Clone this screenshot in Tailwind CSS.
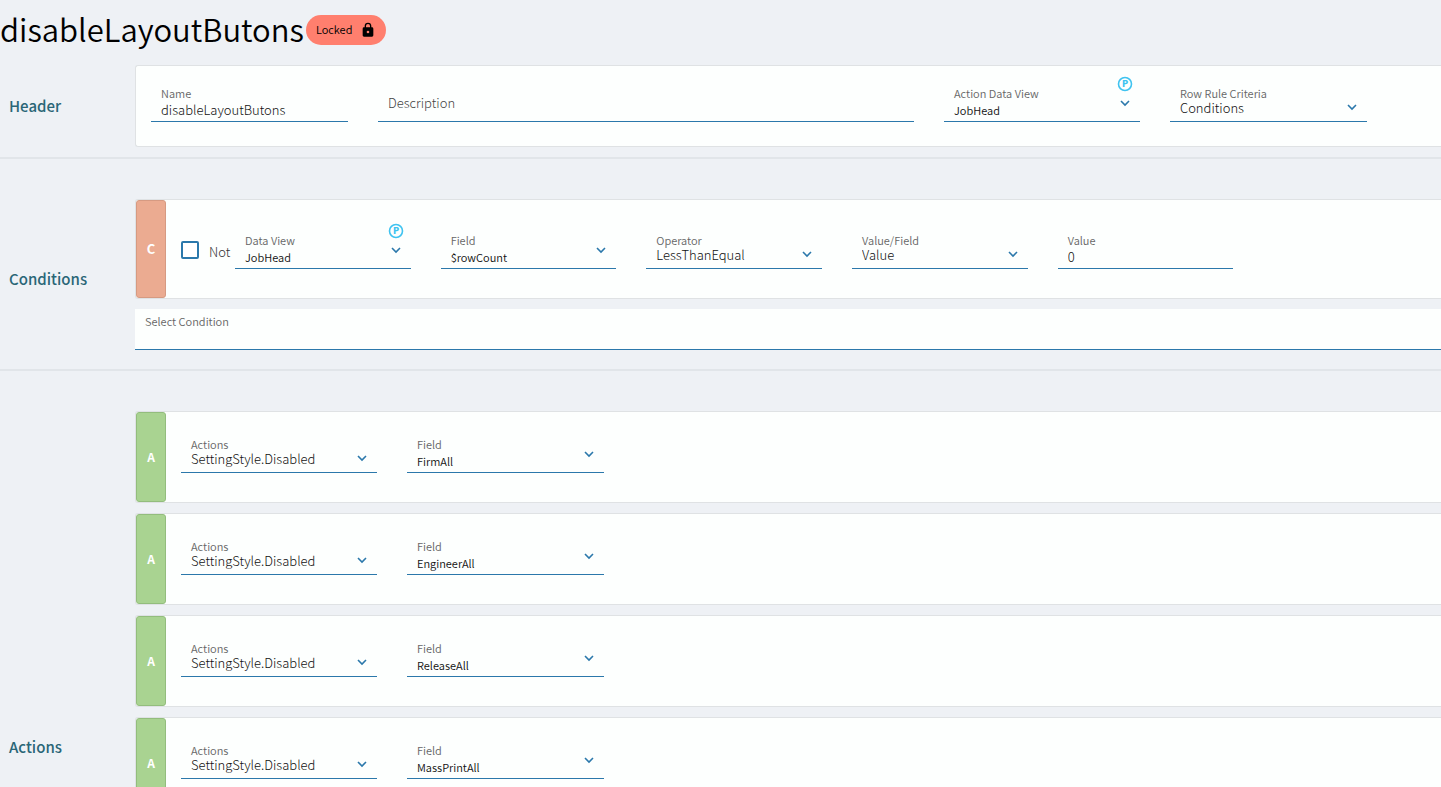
<!DOCTYPE html>
<html lang="en">
<head>
  <meta charset="UTF-8" />
  <meta name="viewport" content="width=device-width, initial-scale=1.0" />
  <title>disableLayoutButons</title>
  <script src="https://cdn.jsdelivr.net/npm/@tailwindcss/browser@4"></script>
</head>
<body class="h-screen overflow-hidden bg-[#eef1f5] font-['Noto_Sans_CJK_JP',sans-serif] font-[350] text-[#111]">

  <!-- Shared icons -->
  <svg class="hidden">
    <symbol id="chevron" viewBox="0 0 10 10"><path d="M1 3l4 4 4-4" fill="none" stroke="currentColor" stroke-width="1.6" /></symbol>
    <symbol id="lock" viewBox="0 0 24 24"><path fill="currentColor" d="M18 8h-1V6A5 5 0 0 0 7 6v2H6a2 2 0 0 0-2 2v10c0 1.100.9 2 2 2h12a2 2 0 0 0 2-2V10a2 2 0 0 0-2-2zm-6 9a2 2 0 1 1 0-4 2 2 0 0 1 0 4zm3-9H9V6a3 3 0 0 1 6 0v2z" /></symbol>
  </svg>

  <!-- Title -->
  <header class="flex h-[65px] items-start gap-[2px]">
    <h1 class="text-[31px] leading-[58px] font-[350] text-black">disableLayoutButons</h1>
    <button type="button" class="mt-[15px] flex h-[30px] w-20 items-center justify-between rounded-full bg-[#ff7f6e] px-[10px] pb-[1px] text-[11px] text-black">
      Locked
      <svg class="size-4"><use href="#lock" /></svg>
    </button>
  </header>

  <main>
    <!-- Header -->
    <section class="flex items-stretch border-b-2 border-[#e1e5e9] pb-[10px]">
      <h2 class="flex w-[135px] shrink-0 items-center pl-[9px] text-[15px] font-medium text-[#2a6677]">Header</h2>
      <div class="grid h-[82px] flex-1 grid-cols-[197fr_536fr_196fr_197fr_44fr] gap-[30px] rounded-l-[3px] border border-r-0 border-[#dfe2e4] bg-[#fdfffe] pt-[21px] pl-[15px]">
        <div class="h-[35px] border-b border-[#2b78ab]">
          <label for="name" class="block px-[10px] text-[11px] leading-[12px] text-[#666]">Name</label>
          <input id="name" type="text" value="disableLayoutButons" class="block h-5 w-full px-[10px] text-[13px] font-light outline-none" />
        </div>
        <div class="h-[35px] border-b border-[#2b78ab]">
          <input id="description" type="text" placeholder="Description" aria-label="Description" class="block h-[31px] w-full px-[10px] text-[13px] font-light outline-none placeholder:text-[#444]" />
        </div>
        <div class="relative h-[35px] border-b border-[#2b78ab]">
          <label for="actionView" class="block px-[10px] text-[11px] leading-[12px] text-[#666]">Action Data View</label>
          <input id="actionView" type="text" value="JobHead" class="block h-[22px] w-full px-[10px] text-[11px] outline-none" />
          <svg viewBox="0 0 16 16" class="absolute right-[7px] bottom-[29px] size-4 text-[#3fc3f0]">
            <circle cx="8" cy="8" r="6.5" fill="none" stroke="currentColor" stroke-width="1.6" />
            <text x="8" y="11" text-anchor="middle" fill="currentColor" class="text-[9px] font-black">P</text>
          </svg>
          <svg class="absolute right-[10px] bottom-[13px] size-[10px] text-[#2b78ab]"><use href="#chevron" /></svg>
        </div>
        <div class="relative h-[35px] border-b border-[#2b78ab]">
          <label for="criteria" class="block px-[10px] text-[11px] leading-[12px] text-[#666]">Row Rule Criteria</label>
          <select id="criteria" class="block h-[18px] w-full appearance-none px-[10px] text-[13px] leading-[18px] font-light outline-none"><option>Conditions</option></select>
          <svg class="absolute right-[10px] bottom-[9px] size-[10px] text-[#2b78ab]"><use href="#chevron" /></svg>
        </div>
      </div>
    </section>

    <!-- Conditions -->
    <section class="flex items-stretch border-b-2 border-[#e1e5e9] pt-10 pb-[10px]">
      <h2 class="flex w-[135px] shrink-0 items-center pl-[9px] text-[15px] font-medium text-[#2a6677]">Conditions</h2>
      <div class="flex-1 pb-[9px]">
        <div class="flex h-[100px] rounded-l-[3px] border border-r-0 border-[#dfe2e4] bg-[#fdfffe]">
          <div class="flex w-[30px] items-center justify-center rounded-[3px] border border-[#d69a82] bg-[#ebab91] text-[13px] font-bold text-white">C</div>
          <div class="flex flex-1 pr-[2px] pl-[15px]">
            <label class="flex w-[54px] items-center gap-[10px] pt-[2px] text-[13px] font-light text-[#333]">
              <input type="checkbox" class="size-[18px] shrink-0 appearance-none rounded-[2px] border-2 border-[#2b78ab] bg-white" />
              <span class="pt-1">Not</span>
            </label>
            <div class="grid flex-1 grid-cols-6 gap-[30px] pt-[34px]">
              <div class="relative h-[35px] border-b border-[#2b78ab]">
                <label for="dataView" class="block px-[10px] text-[11px] leading-[12px] text-[#666]">Data View</label>
                <input id="dataView" type="text" value="JobHead" class="block h-[22px] w-full px-[10px] text-[11px] outline-none" />
                <svg viewBox="0 0 16 16" class="absolute right-[7px] bottom-[29px] size-4 text-[#3fc3f0]">
                  <circle cx="8" cy="8" r="6.5" fill="none" stroke="currentColor" stroke-width="1.6" />
                  <text x="8" y="11" text-anchor="middle" fill="currentColor" class="text-[9px] font-black">P</text>
                </svg>
                <svg class="absolute right-[10px] bottom-[13px] size-[10px] text-[#2b78ab]"><use href="#chevron" /></svg>
              </div>
              <div class="relative h-[35px] border-b border-[#2b78ab]">
                <label for="field" class="block px-[10px] text-[11px] leading-[12px] text-[#666]">Field</label>
                <input id="field" type="text" value="$rowCount" class="block h-[22px] w-full px-[10px] text-[11px] outline-none" />
                <svg class="absolute right-[10px] bottom-[13px] size-[10px] text-[#2b78ab]"><use href="#chevron" /></svg>
              </div>
              <div class="relative h-[35px] border-b border-[#2b78ab]">
                <label for="operator" class="block px-[10px] text-[11px] leading-[12px] text-[#666]">Operator</label>
                <select id="operator" class="block h-[18px] w-full appearance-none px-[10px] text-[13px] leading-[18px] font-light outline-none"><option>LessThanEqual</option></select>
                <svg class="absolute right-[10px] bottom-[9px] size-[10px] text-[#2b78ab]"><use href="#chevron" /></svg>
              </div>
              <div class="relative h-[35px] border-b border-[#2b78ab]">
                <label for="valueField" class="block px-[10px] text-[11px] leading-[12px] text-[#666]">Value/Field</label>
                <select id="valueField" class="block h-[18px] w-full appearance-none px-[10px] text-[13px] leading-[18px] font-light outline-none"><option>Value</option></select>
                <svg class="absolute right-[10px] bottom-[9px] size-[10px] text-[#2b78ab]"><use href="#chevron" /></svg>
              </div>
              <div class="h-[35px] border-b border-[#2b78ab]">
                <label for="value" class="block px-[10px] text-[11px] leading-[12px] text-[#666]">Value</label>
                <input id="value" type="text" value="0" class="block h-5 w-full px-[10px] text-[13px] font-light outline-none" />
              </div>
            </div>
          </div>
        </div>

        <div class="mt-[10px] h-[41px] border-b border-[#2b78ab] bg-[#fdfffe] pt-[6px]">
          <label for="selectCondition" class="block px-[10px] text-[11px] leading-[12px] text-[#666]">Select Condition</label>
          <select id="selectCondition" class="block h-5 w-full appearance-none px-[10px] text-[13px] outline-none"></select>
        </div>
      </div>
    </section>

    <!-- Actions -->
    <section class="flex min-h-[712px] items-stretch pt-10">
      <h2 class="flex w-[135px] shrink-0 items-center pl-[9px] text-[15px] font-medium text-[#2a6677]">Actions</h2>
      <div id="actions" class="flex flex-1 flex-col gap-[10px]"></div>
    </section>
  </main>

  <script>
    // Fields disabled by the rule
    const fields = ['FirmAll', 'EngineerAll', 'ReleaseAll', 'MassPrintAll'];

    document.getElementById('actions').innerHTML = fields.map((field, i) => `
      <div class="flex h-[92px] rounded-l-[3px] border border-r-0 border-[#dfe2e4] bg-[#fdfffe]">
        <div class="flex w-[30px] items-center justify-center rounded-[3px] border border-[#93bd7d] bg-[#a9d391] text-[12px] font-bold text-white">A</div>
        <div class="grid flex-1 grid-cols-[196fr_197fr_807fr] gap-[30px] pt-[26px] pl-[15px]">
          <div class="relative h-[35px] border-b border-[#2b78ab]">
            <label for="action${i}" class="block px-[10px] text-[11px] leading-[12px] text-[#666]">Actions</label>
            <select id="action${i}" class="block h-[18px] w-full appearance-none px-[10px] text-[13px] leading-[18px] font-light outline-none"><option>SettingStyle.Disabled</option></select>
            <svg class="absolute right-[10px] bottom-[9px] size-[10px] text-[#2b78ab]"><use href="#chevron" /></svg>
          </div>
          <div class="relative h-[35px] border-b border-[#2b78ab]">
            <label for="field${i}" class="block px-[10px] text-[11px] leading-[12px] text-[#666]">Field</label>
            <input id="field${i}" type="text" value="${field}" class="block h-[22px] w-full px-[10px] text-[11px] outline-none" />
            <svg class="absolute right-[10px] bottom-[13px] size-[10px] text-[#2b78ab]"><use href="#chevron" /></svg>
          </div>
        </div>
      </div>`).join('');
  </script>
</body>
</html>
